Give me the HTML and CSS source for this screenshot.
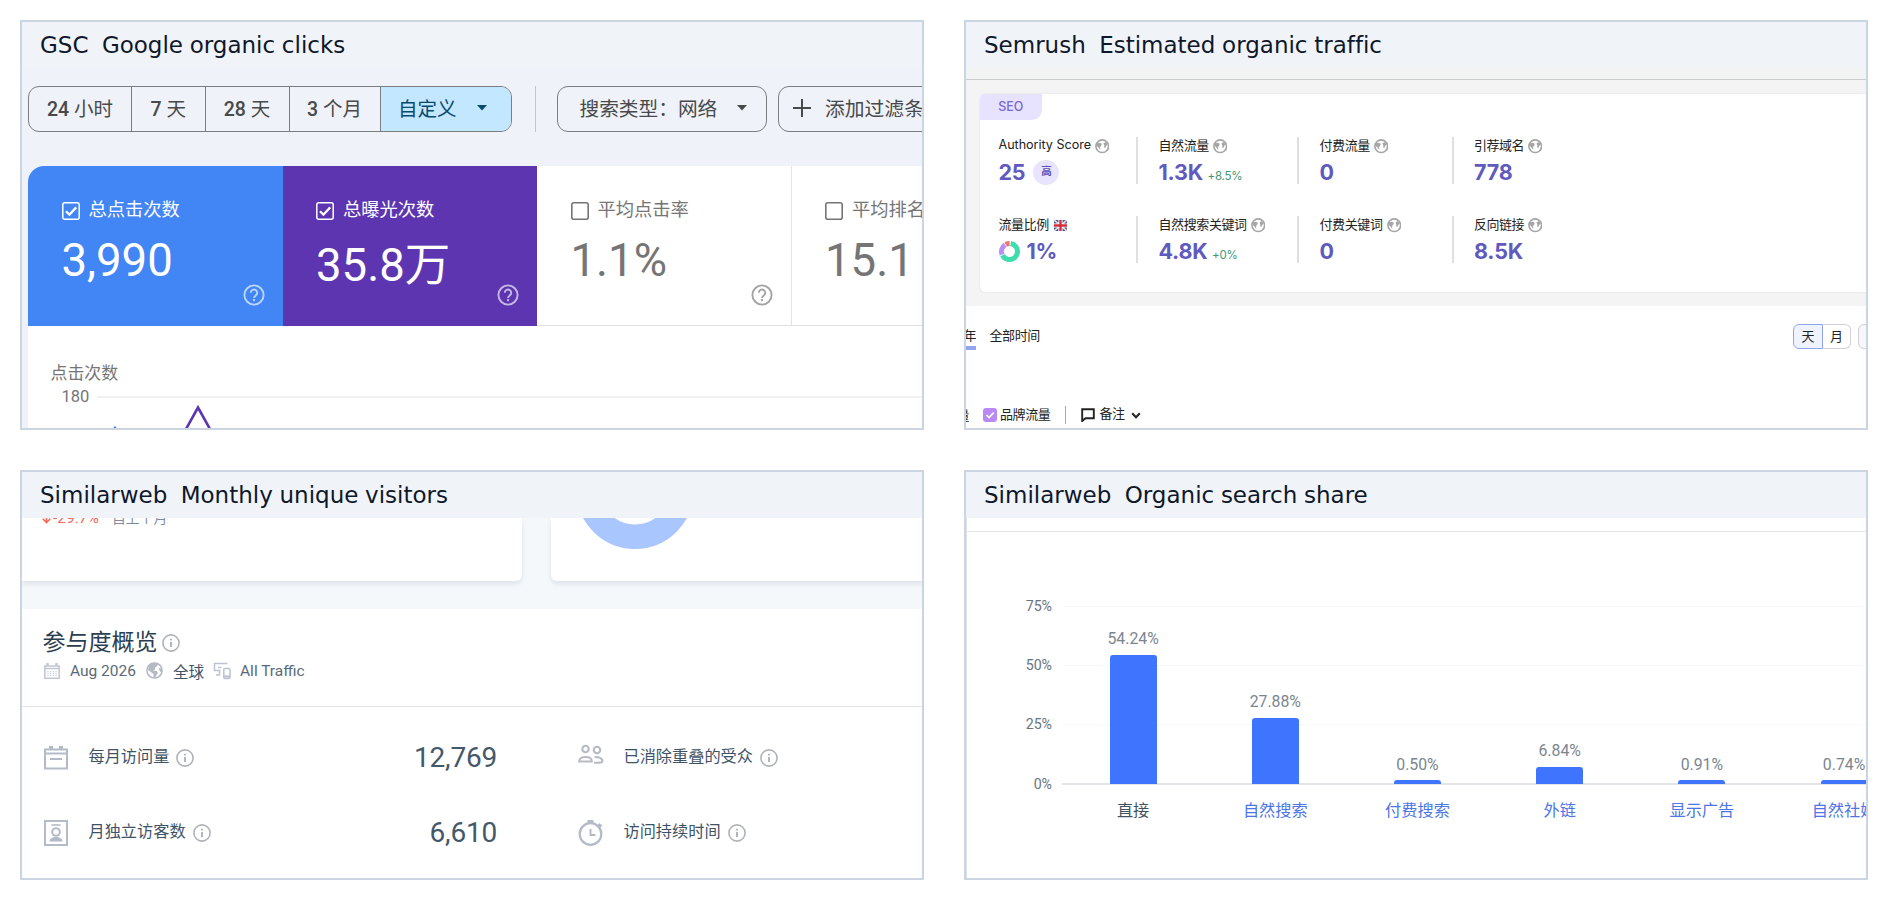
FILE: index.html
```html
<!DOCTYPE html>
<html lang="zh-CN">
<head>
<meta charset="utf-8">
<title>Traffic sources</title>
<link rel="stylesheet" href="styles.css">
</head>
<body>
<svg class="defs" width="0" height="0">
  <symbol id="help" viewBox="0 0 22 22"><circle cx="11" cy="11" r="9.6" fill="none" stroke="currentColor" stroke-width="1.9"/><path d="M7.8 8.8a3.2 3.2 0 1 1 5 2.6c-1.1.8-1.8 1.3-1.8 2.6" fill="none" stroke="currentColor" stroke-width="1.9"/><rect x="10" y="15.1" width="2" height="2" fill="currentColor"/></symbol>
  <symbol id="info" viewBox="0 0 18 18"><circle cx="9" cy="9" r="8.1" fill="none" stroke="currentColor" stroke-width="1.6"/><path d="M9 8v5M9 4.8v1.8" stroke="currentColor" stroke-width="1.9"/></symbol>
  <symbol id="globe" viewBox="0 0 14 14"><circle cx="7" cy="7" r="6.1" fill="#fff" stroke="currentColor" stroke-width="1.6"/><path d="M1.500 4 4.500 3.500 6.600 4.600 6 6.500 5 7.500V10.500L3.800 8.800 2 7zM8.200 4.200 10.500 2.800 12.300 5 11 6.500 9.800 9 9 8.500V6.500z" fill="currentColor"/></symbol>
  <symbol id="caret" viewBox="0 0 10 6"><path d="M0 0h10L5 5.6z" fill="currentColor"/></symbol>
</svg>
<main class="board">

<section class="panel gsc">
  <h2 class="title">GSC  Google organic clicks</h2>
  <div class="toolbar">
    <div class="segments">
      <span class="seg s1"><b>24</b> 小时</span><span class="seg s2"><b>7</b> 天</span><span class="seg s3"><b>28</b> 天</span><span class="seg s4"><b>3</b> 个月</span><span class="seg s5">自定义<svg class="caret"><use href="#caret"/></svg></span>
    </div>
    <i class="bar"></i>
    <div class="chip type">搜索类型：网络<svg class="caret"><use href="#caret"/></svg></div>
    <div class="chip add"><svg class="plus" viewBox="0 0 18 18"><path d="M9 0v18M0 9h18" stroke="currentColor" stroke-width="2"/></svg>添加过滤条件</div>
  </div>
  <div class="metrics">
    <div class="metric blue"><div class="check"><svg viewBox="0 0 18 18"><rect x=".8" y=".8" width="16.4" height="16.4" rx="2" fill="none" stroke="currentColor" stroke-width="1.5"/><path d="m4 9.3 3.4 3.4L14.2 5.400" fill="none" stroke="currentColor" stroke-width="2.3"/></svg>总点击次数</div><div class="big">3,990</div><svg class="help"><use href="#help"/></svg></div>
    <div class="metric purple"><div class="check"><svg viewBox="0 0 18 18"><rect x=".8" y=".8" width="16.4" height="16.4" rx="2" fill="none" stroke="currentColor" stroke-width="1.5"/><path d="m4 9.3 3.4 3.4L14.2 5.400" fill="none" stroke="currentColor" stroke-width="2.3"/></svg>总曝光次数</div><div class="big low">35.8万</div><svg class="help"><use href="#help"/></svg></div>
    <div class="metric"><div class="check"><svg viewBox="0 0 18 18"><rect x=".8" y=".8" width="16.4" height="16.4" rx="2" fill="none" stroke="currentColor" stroke-width="1.6"/></svg>平均点击率</div><div class="big">1.1%</div><svg class="help"><use href="#help"/></svg></div>
    <div class="metric"><div class="check"><svg viewBox="0 0 18 18"><rect x=".8" y=".8" width="16.4" height="16.4" rx="2" fill="none" stroke="currentColor" stroke-width="1.6"/></svg>平均排名</div><div class="big">15.1</div></div>
  </div>
  <div class="trend">
    <div class="trend-name">点击次数</div>
    <div class="trend-axis"><span>180</span><i></i></div>
    <svg class="trend-line" viewBox="0 0 200 24"><path d="m157.500 26 12.500-22.500L182.500 26" fill="none" stroke="#5e35b1" stroke-width="2.6"/><path d="m85 26 2-3 2 3" fill="none" stroke="#4285f4" stroke-width="1.500"/></svg>
  </div>
</section>

<section class="panel sem">
  <h2 class="title">Semrush  Estimated organic traffic</h2>
  <div class="sem-top"></div>
  <div class="sem-band">
    <div class="sem-card">
      <span class="tag">SEO</span>
      <div class="stats">
        <div class="stat"><div class="lab en">Authority Score<svg class="globe"><use href="#globe"/></svg></div><div class="val">25<span class="badge">高</span></div></div>
        <div class="stat"><div class="lab">自然流量<svg class="globe"><use href="#globe"/></svg></div><div class="val">1.3K<small>+8.5%</small></div></div>
        <div class="stat"><div class="lab">付费流量<svg class="globe"><use href="#globe"/></svg></div><div class="val">0</div></div>
        <div class="stat"><div class="lab">引荐域名<svg class="globe"><use href="#globe"/></svg></div><div class="val">778</div></div>
        <div class="stat"><div class="lab">流量比例<svg class="flag" viewBox="0 0 13 11"><rect width="13" height="11" rx="1" fill="#4a5590"/><path d="m0 0 13 11M13 0 0 11" stroke="#e9dfe6" stroke-width="1.6"/><path d="M6.500 0v11M0 5.500h13" stroke="#fff" stroke-width="4.200"/><path d="M6.500 0v11M0 5.500h13" stroke="#d22f3a" stroke-width="2.400"/></svg></div><div class="val"><svg class="ring" viewBox="0 0 21 21"><g fill="none" stroke-width="5"><circle cx="10.500" cy="10.500" r="8" pathLength="100" stroke="#3fdcae" stroke-dasharray="65 35" transform="rotate(-82 10.500 10.500)"/><circle cx="10.500" cy="10.500" r="8" pathLength="100" stroke="#bb8df6" stroke-dasharray="22 78" transform="rotate(157 10.500 10.500)"/><circle cx="10.500" cy="10.500" r="8" pathLength="100" stroke="#f2726f" stroke-dasharray="8 92" transform="rotate(242 10.500 10.500)"/></g></svg>1%</div></div>
        <div class="stat"><div class="lab">自然搜索关键词<svg class="globe"><use href="#globe"/></svg></div><div class="val">4.8K<small>+0%</small></div></div>
        <div class="stat"><div class="lab">付费关键词<svg class="globe"><use href="#globe"/></svg></div><div class="val">0</div></div>
        <div class="stat"><div class="lab">反向链接<svg class="globe"><use href="#globe"/></svg></div><div class="val">8.5K</div></div>
      </div>
    </div>
  </div>
  <div class="range">
    <span class="year">年</span><span class="all">全部时间</span>
    <div class="toggle"><span class="on">天</span><span>月</span></div><span class="more"></span>
  </div>
  <div class="legend">
    <span class="cut">量</span>
    <svg class="tick" viewBox="0 0 14 14"><rect width="14" height="14" rx="3" fill="#b98af6"/><path d="m3.500 7 2.600 2.500 4.600-4.800" fill="none" stroke="#fff" stroke-width="1.700"/></svg>
    <span class="brand">品牌流量</span><i class="bar"></i>
    <svg class="note" viewBox="0 0 14 14"><path d="M1.200 1.200h11.600v9H4.500L1.200 13z" fill="none" stroke="currentColor" stroke-width="1.900"/></svg>
    <span class="memo">备注</span>
    <svg class="chev" viewBox="0 0 10 7"><path d="m1.200 1.200 3.800 4 3.800-4" fill="none" stroke="currentColor" stroke-width="2"/></svg>
  </div>
</section>

<section class="panel sim">
  <h2 class="title">Similarweb  Monthly unique visitors</h2>
  <div class="cards">
    <div class="card left"><p class="drop"><svg class="down" viewBox="0 0 9 12"><path d="M4.500 0v10.500M.8 6.800l3.700 3.900 3.700-3.900" fill="none" stroke="currentColor" stroke-width="1.600"/></svg><span>-29.7%</span>自上个月</p></div>
    <div class="card right"><svg class="donut" viewBox="0 0 118 31"><circle cx="59" cy="-28" r="46.700" fill="none" stroke="#a9c6ff" stroke-width="24.400"/></svg></div>
  </div>
  <div class="engage">
    <div class="head">参与度概览<svg class="info"><use href="#info"/></svg></div>
    <div class="meta">
      <svg class="cal" viewBox="0 0 16 16"><path d="M.8 3h14.400v12.200H.8zM.8 5.500h14.400" fill="none" stroke="currentColor" stroke-width="1.500"/><path d="M3.500 0v3M12.500 0v3" stroke="currentColor" stroke-width="2.400"/><path d="M4 8v5M6.700 8v5M9.300 8v5M12 8v5" stroke="currentColor" stroke-width="1" stroke-dasharray="1.300 .6"/></svg>
      <span class="date">Aug 2026</span>
      <svg class="world" viewBox="0 0 17 17"><circle cx="8.500" cy="8.500" r="7.600" fill="#fff" stroke="currentColor" stroke-width="1.500"/><path d="M3 3.500 7 1h4.500v3L9 5.500v2l-2 1 3.500.500 1.500 2-1.500 2L9 16l-1.500-1v-3L2 8z" fill="currentColor"/><path d="m12.500 6 3.500.500v4l-2-1z" fill="currentColor"/></svg>
      <span class="area">全球</span>
      <svg class="device" viewBox="0 0 18 18"><path d="M14.500 1.500H1.500v7h6M8.300 5.500H5M6.500 9v4H3" fill="none" stroke="currentColor" stroke-width="1.500"/><rect x="10.800" y="6.500" width="6.200" height="10" rx="1" fill="none" stroke="currentColor" stroke-width="1.500"/><path d="M10.800 14.500H17" stroke="currentColor" stroke-width="2.200"/></svg>
      <span class="traffic">All Traffic</span>
    </div>
  </div>
  <div class="facts">
    <div class="fact"><svg class="fi" viewBox="0 0 24 26"><path d="M1 4.500h22v19H1z" fill="none" stroke="currentColor" stroke-width="2"/><path d="M1 8.500h22M6 14h12" stroke="currentColor" stroke-width="2"/><path d="M5 3h4M15 3h4" stroke="currentColor" stroke-width="4"/></svg><span>每月访问量</span><svg class="info"><use href="#info"/></svg><b>12,769</b></div>
    <div class="fact"><svg class="fi people" viewBox="0 0 26 26"><g fill="none" stroke="currentColor" stroke-width="2.100"><circle cx="7.500" cy="5" r="3.200"/><circle cx="19" cy="6" r="3.200"/><path d="M1.200 17.500c0-3 2.500-4.500 6.300-4.500s6.300 1.500 6.300 4.500zM16.500 13c5 0 8 1.500 8 4.500 0 1-1.500 1.200-8.500 1.200"/></g></svg><span>已消除重叠的受众</span><svg class="info"><use href="#info"/></svg></div>
    <div class="fact"><svg class="fi" viewBox="0 0 24 26"><path d="M1 1h22v24H1z" fill="none" stroke="currentColor" stroke-width="2"/><path d="M7.500 5h9" stroke="currentColor" stroke-width="1.600"/><circle cx="12" cy="12" r="3.800" fill="none" stroke="currentColor" stroke-width="2"/><path d="M5.500 21.500c0-3 3-4.500 6.500-4.500s6.500 1.500 6.500 4.500z" fill="currentColor"/></svg><span>月独立访客数</span><svg class="info"><use href="#info"/></svg><b>6,610</b></div>
    <div class="fact"><svg class="fi clock" viewBox="0 0 26 26"><circle cx="12.500" cy="14" r="10.800" fill="none" stroke="currentColor" stroke-width="2.200"/><path d="M12.500 9v6h5" fill="none" stroke="currentColor" stroke-width="2"/><path d="M9.500 1.500h6" stroke="currentColor" stroke-width="3"/><path d="m20 4.500 3 2.500" stroke="currentColor" stroke-width="4"/></svg><span>访问持续时间</span><svg class="info"><use href="#info"/></svg></div>
  </div>
</section>

<section class="panel share">
  <h2 class="title">Similarweb  Organic search share</h2>
  <div class="rule"></div>
  <div class="chart">
    <div class="ylabels"><span>75%</span><span>50%</span><span>25%</span><span>0%</span></div>
    <div class="plot">
      <div class="grid"><i></i><i></i><i></i></div>
      <div class="bars">
        <div class="col"><span>54.24%</span><i style="height:129px"></i></div>
        <div class="col"><span>27.88%</span><i style="height:66px"></i></div>
        <div class="col tiny"><span>0.50%</span><i style="height:4px"></i></div>
        <div class="col"><span>6.84%</span><i style="height:17px"></i></div>
        <div class="col tiny"><span>0.91%</span><i style="height:4px"></i></div>
        <div class="col tiny"><span>0.74%</span><i style="height:4px"></i></div>
      </div>
    </div>
  </div>
  <div class="names"><span class="plain">直接</span><span>自然搜索</span><span>付费搜索</span><span>外链</span><span>显示广告</span><span>自然社媒</span></div>
</section>
</main>
</body>
</html>
```
FILE: styles.css
```css
* { box-sizing: border-box; }
body { margin: 0; background: #fff; font-family: Roboto, "Noto Sans CJK SC", sans-serif; }
svg { display: block; flex: none; }
.defs { position: absolute; }
.board { width: 1888px; height: 900px; padding: 20px; display: grid; grid-template-columns: 904px 904px; grid-template-rows: 410px 410px; gap: 40px; }
.panel { border: 2px solid #cbd5e1; overflow: hidden; background: #fff; display: flex; flex-direction: column; }
.title { margin: 0; height: 46px; flex: none; padding-left: 18px; background: #f0f4f9; color: #0f172a; font: 400 23px/47px "DejaVu Sans", sans-serif; white-space: pre; word-spacing: -.6px; font-variant-ligatures: none; }
span, div { white-space: nowrap; }

/* search console */
.gsc { background: #eff2f9; }
.toolbar { display: flex; height: 46px; margin: 18px 0 0 6px; flex: none; width: 1000px; font-size: 19.5px; color: #47494a; }
.segments { display: flex; width: 484px; border: 1.5px solid #7b7e80; border-radius: 11px; overflow: hidden; line-height: 45px; }
.seg { border-right: 1.5px solid #7b7e80; text-align: center; }
.seg b { font-weight: 500; }
.s1 { width: 103px; } .s2 { width: 73.500px; } .s3 { width: 84px; } .s4 { width: 91px; }
.s5 { flex: 1; border: 0; background: #c2e7ff; color: #0b4a70; display: flex; align-items: center; padding-left: 17.500px; }
.caret { width: 10px; height: 6px; margin-top: -2px; }
.s5 .caret { margin-left: 20px; }
.toolbar > .bar { width: 1px; background: #c4c7ca; margin: 0 21px 0 23px; }
.chip { border: 1.5px solid #7b7e80; border-radius: 11px; display: flex; align-items: center; line-height: 45px; flex: none; }
.type { width: 210px; padding-left: 21.500px; margin-right: 11px; font-size: 19.700px; }
.type .caret { margin-left: 20px; }
.add { width: 220px; padding-left: 14px; font-size: 19.800px; }
.plus { width: 18px; height: 18px; margin: -3px 14px 0 0; }
.metrics { display: grid; grid-template-columns: repeat(4, 254.500px); margin: 34px 0 0 6px; width: 1018px; height: 160px; flex: none; border-radius: 16px 0 0; overflow: hidden; background: #fff; }
.metric { border-right: 1px solid #e1e3e6; border-bottom: 1px solid #dfe1e4; color: #757575; padding: 32px 0 0 33.500px; display: grid; grid-template-rows: 24px 1fr; grid-template-columns: 1fr; }
.metric > * { grid-column: 1; }
.blue { background: #4285f4; color: #fff; border: 0; }
.purple { background: #5e35b1; color: #fff; border: 0; }
.check { display: flex; align-items: center; font-size: 18.300px; line-height: 24px; height: 24px; }
.check svg { width: 18px; height: 18px; margin: 1px 9px 0 0; }
.big { grid-row: 2; font-size: 45.500px; line-height: 54px; padding-top: 12px; }
.low { padding-top: 17px; }
.help { grid-row: 2; width: 22px; height: 22px; align-self: end; justify-self: end; margin: 0 18px 19.500px 0; opacity: .65; }
.blue .help, .purple .help { margin-bottom: 20px; }
.trend { margin-left: 6px; background: #fff; flex: 1; width: 900px; padding-top: 35px; }
.trend-name { font-size: 16.900px; line-height: 24px; margin-left: 22.500px; color: #757575; }
.trend-axis { display: flex; align-items: center; font-size: 16.500px; line-height: 22px; color: #757575; padding-left: 33.500px; margin-top: 1px; }
.trend-axis i { flex: 1; height: 2px; background: #f1f1f1; margin-left: 8px; }
.trend-line { width: 200px; height: 24px; margin-top: -4px; }

/* semrush */
.sem { font-family: Inter, "Noto Sans CJK SC", sans-serif; color: #222; }
.sem-top { height: 12px; flex: none; background: #f2f4f4; border-bottom: 1px solid #cdcdcd; }
.sem-band { height: 226px; flex: none; background: #f4f4f4; padding: 14px 0 14px 14px; }
.sem-card { width: 900px; height: 198px; background: #fff; border-radius: 6px; box-shadow: 0 0 3px rgba(0,0,0,.08); }
.tag { display: block; width: 61.500px; height: 26px; border-radius: 5px 0 10px; background: #e7e2fe; color: #7869cf; font-size: 12.500px; font-weight: 500; line-height: 26px; text-align: center; }
.stats { display: grid; grid-template-columns: 156px 161px 154.500px 200px; grid-auto-rows: 47px; row-gap: 32px; padding-top: 17px; }
.stat { border-left: 2px solid #e0e0e0; padding-left: 20.500px; }
.stat:nth-child(4n+1) { border: 0; padding-left: 18.500px; }
.lab { display: flex; align-items: center; height: 18px; font-size: 13px; line-height: 18px; letter-spacing: -.4px; margin-top: -1px; }
.en { font-size: 12.600px; letter-spacing: -.03px; }
.globe { width: 14.500px; height: 14.500px; margin: 3px 0 0 4px; color: #a6a6a6; }
.stat:nth-child(4n) .globe { margin-left: 3.500px; }
.stat:nth-child(4n) .lab { letter-spacing: -.5px; }
.flag { width: 13px; height: 11px; margin: 2px 0 0 5px; }
.val { display: flex; align-items: center; height: 30px; margin-top: 3px; font-size: 21.500px; font-weight: 700; line-height: 30px; color: #605abf; letter-spacing: -.2px; }
.val small { font-size: 11.500px; font-weight: 400; color: #3f9777; margin: 8px 0 0 4.500px; line-height: 14px; }
.badge { width: 26px; height: 25px; border-radius: 50%; background: #e8e4fd; color: #5b4fb8; font-size: 10.500px; line-height: 24px; text-align: center; margin-left: 8px; }
.ring { width: 21px; height: 21px; margin-right: 7px; }
.range { display: flex; height: 46px; padding-top: 18px; flex: none; font-size: 13px; letter-spacing: -.4px; line-height: 22px; width: 1000px; }
.year { width: 10px; height: 26px; border-bottom: 4px solid #93a5ee; direction: rtl; overflow: hidden; }
.all { margin-left: 13.500px; width: 53px; }
.toggle { display: flex; width: 58px; height: 25px; margin-left: 750.500px; }
.toggle span { flex: 1; border: 1px solid #d0d0d6; border-left: 0; border-radius: 0 6px 6px 0; text-align: center; line-height: 22px; }
.toggle .on { border: 1px solid #8fa5ec; border-radius: 6px 0 0 6px; background: #eff3ff; }
.more { width: 30px; height: 25px; margin-left: 7px; border: 1px solid #d0d0d6; border-radius: 6px; background: #f7f7f9; }
.legend { display: flex; height: 20px; margin-top: 53px; font-size: 13px; letter-spacing: -.4px; line-height: 18px; align-items: center; flex: none; }
.cut { width: 3px; overflow: hidden; direction: rtl; }
.tick { width: 14px; height: 14px; margin: 0 3px 0 14px; }
.brand { margin-top: -2px; }
.legend .bar { width: 1px; height: 18px; background: #aaa; margin: 0 15px; }
.note { width: 14px; height: 14px; margin-right: 4px; }
.memo { margin-top: -4px; }
.chev { width: 10px; height: 7px; margin-left: 6px; }

/* similarweb overview */
.sim { color: #3f5366; }
.cards { display: flex; height: 91px; flex: none; background: #f5f8fb; }
.card { height: 63px; flex: none; background: #fff; box-shadow: 0 3px 5px rgba(60,80,120,.12); clip-path: inset(0 -8px -12px -8px); }
.card.left { width: 500px; border-radius: 0 0 6px; margin-right: 29px; }
.card.right { width: 390px; border-radius: 0 0 0 6px; padding-left: 25px; }
.donut { width: 118px; height: 31px; }
.drop { display: flex; margin: -9px 0 0 20px; font-size: 13.800px; line-height: 18px; color: #7f8d9a; }
.drop span { color: #f4695a; font-size: 15.500px; margin: 0 10px 0 2px; width: 49px; }
.down { width: 9px; height: 12px; margin-top: 3px; color: #f4695a; }
.engage { height: 98px; border-bottom: 1px solid #e2e5e8; padding: 19px 0 0 20.500px; flex: none; }
.head { display: flex; align-items: center; font-size: 23px; line-height: 30px; height: 30px; color: #2a3e52; }
.info { width: 18px; height: 18px; color: #b0b3b8; }
.head .info { margin: -1px 0 0 4.500px; }
.meta { display: flex; align-items: center; height: 22px; margin-top: 1.500px; font-size: 15.500px; color: #5a6a78; }
.cal { width: 16px; height: 16px; margin: 0 10px 0 1.500px; color: #c0c6d2; }
.date { width: 66px; }
.world { width: 17px; height: 17px; margin: 0 10px 0 10px; color: #b4bac3; }
.area { color: #3f5366; width: 31px; }
.device { width: 18px; height: 18px; margin: 0 9.500px 0 8.500px; color: #bcc4d2; }
.facts { display: grid; grid-template-columns: 535px 365px; grid-auto-rows: 74.500px; padding-top: 14px; }
.fact { display: flex; height: 74px; align-items: center; padding-left: 22px; font-size: 16.200px; }
.fact span { margin: -2px 7px 0 20.500px; line-height: 24px; }
.fi { width: 24px; height: 26px; color: #b3bbc9; }
.people { color: #b6bac2; }
.people, .clock { width: 26px; margin-left: -1px; }
.people { margin-top: -2px; }
.fact b { font-weight: 400; font-size: 28px; line-height: 32px; margin-left: auto; margin-right: 60px; color: #44586a; letter-spacing: -.2px; }
.fact:nth-child(even) span { margin-left: 19.500px; }

/* similarweb channels */
.rule { height: 13px; border-bottom: 1px solid #e4e7ea; flex: none; margin-top: .5px; }
.share { box-shadow: inset 1px 0 #dde3ea; }
.chart { display: flex; height: 179px; margin-top: 74.500px; flex: none; }
.ylabels { width: 86px; flex: none; display: flex; flex-direction: column; align-items: flex-end; font-size: 14.200px; line-height: 20px; color: #68757f; margin-top: -10px; }
.ylabels span { height: 59.200px; flex: none; }
.plot { display: grid; width: 850px; height: 179px; margin-left: 10px; flex: none; border-bottom: 2px solid #e3e5e8; }
.grid, .bars { grid-area: 1 / 1; }
.grid i { display: block; height: 59.200px; border-top: 1px solid #f7f8f9; }
.bars { display: grid; grid-template-columns: repeat(6, 142.200px); height: 177.500px; }
.col { display: flex; flex-direction: column; align-items: center; justify-content: flex-end; }
.col i { width: 47px; flex: none; background: #3e74fe; border-radius: 3px 3px 0 0; }
.col span { font-size: 15.800px; line-height: 20px; margin-bottom: 6px; color: #7b868f; }
.tiny span { margin-bottom: 4.500px; }
.names { display: grid; grid-template-columns: repeat(6, 142.200px); margin: 14px 0 0 96px; width: 854px; text-align: center; font-size: 16.200px; line-height: 24px; color: #4c75e8; }
.names .plain { color: #43525f; }
```
